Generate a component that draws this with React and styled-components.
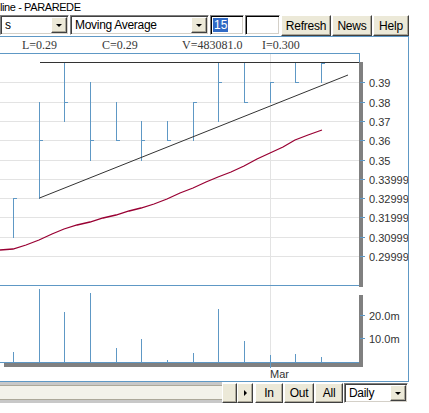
import React from 'react'
import styled, { createGlobalStyle } from 'styled-components'

const GlobalStyle = createGlobalStyle`
    html, body {
        margin: 0;
        padding: 0;
        background: #fff;
    }
    body {
        font-family: "Liberation Sans", Arial, sans-serif;
        font-size: 11px;
        color: #000;
        overflow: hidden;
    }
`

const BLUE = '#5e98c5'
const GRID = '#e3e3e3'
const LABEL = '#333'

// y of price level k (k=0 is 0.40)
const lv = k => 63 + k * 19.3

// x, high level, low level, close level
const bars = [
    [13, 7, 9, 7], [39, 2, 7, 4], [64, 0, 3, 2], [90, 1, 5, 4],
    [116, 2, 4, 4], [141, 3, 5, 4], [167, 3, 4, 4], [193, 2, 4, 2],
    [218, 0, 3, 1], [244, 0, 2, 2], [270, 1, 2, 1], [295, 0, 1, 1],
    [321, 0, 1, 0],
]

const volumes = [
    [13, 352], [39, 289], [64, 312], [90, 293], [116, 348], [141, 339], [167, 360],
    [193, 353], [218, 309], [244, 341], [270, 355], [295, 354], [321, 357],
]

const priceLabels = ['0.39', '0.38', '0.37', '0.36', '0.35', '0.33999', '0.32999', '0.31999', '0.30999', '0.29999']

const maPoints = [
    [0, 250], [13, 249], [26, 245], [39, 240], [52, 234], [64, 229], [77, 225], [90, 222],
    [103, 218], [116, 215], [129, 211], [141, 208], [154, 204], [167, 199], [180, 193],
    [193, 188], [206, 182], [218, 177], [231, 172], [244, 166], [257, 159], [270, 153],
    [283, 147], [295, 140], [308, 135], [322, 130],
].map(p => p.join(',')).join(' ')

function Chart() {
    return (
        <ChartSvg width="408" height="328" viewBox="0 53 408 328">
            <g shapeRendering="crispEdges">
                {priceLabels.map((l, i) => (
                    <line key={l} x1="0" x2="359" y1={Math.round(lv(i + 1)) + 0.5} y2={Math.round(lv(i + 1)) + 0.5} stroke={GRID} />
                ))}
                <line x1="270.5" x2="270.5" y1="54" y2="362" stroke={GRID} />

                <line x1="0" x2="360" y1="53.5" y2="53.5" stroke={BLUE} />
                <line x1="359.5" x2="359.5" y1="53" y2="62" stroke={BLUE} />
                <line x1="0" x2="360" y1="285.5" y2="285.5" stroke={BLUE} />
                <line x1="0" x2="360" y1="362.5" y2="362.5" stroke={BLUE} />
                <rect x="359" y="62" width="4" height="225" fill="#808080" />
                <rect x="359" y="295" width="4" height="72" fill="#808080" />
                <rect x="4" y="363" width="359" height="4" fill="#808080" />

                {bars.map(([x, h, l, c]) => (
                    <g key={x} stroke={BLUE}>
                        <line x1={x + 0.5} x2={x + 0.5} y1={Math.round(lv(h))} y2={Math.round(lv(l)) + 1} />
                        <line x1={x + 1} x2={x + 4} y1={Math.round(lv(c)) + 0.5} y2={Math.round(lv(c)) + 0.5} />
                    </g>
                ))}

                {volumes.map(([x, top]) => (
                    <line key={x} x1={x + 0.5} x2={x + 0.5} y1={top} y2="362" stroke={BLUE} />
                ))}
                <line x1="270.5" x2="270.5" y1="362" y2="368" stroke={BLUE} />

                {priceLabels.map((l, i) => (
                    <line key={l} x1="360" x2="365" y1={Math.round(lv(i + 1)) + 0.5} y2={Math.round(lv(i + 1)) + 0.5} stroke={BLUE} />
                ))}
                <line x1="360" x2="365" y1="315.5" y2="315.5" stroke={BLUE} />
                <line x1="360" x2="365" y1="338.5" y2="338.5" stroke={BLUE} />

                <line x1="40" x2="359" y1="62.5" y2="62.5" stroke="#333" />
            </g>

            <line x1="39.5" y1="198" x2="348" y2="75" stroke="#333" strokeWidth="1" />
            <polyline points={maPoints} fill="none" stroke="#990033" strokeWidth="1.3" />

            <g fill={LABEL} fontSize="11" fontFamily='"Liberation Sans", Arial, sans-serif'>
                {priceLabels.map((l, i) => (
                    <text key={l} x="369" y={Math.round(lv(i + 1)) + 4.5}>{l}</text>
                ))}
                <text x="369" y="320">20.0m</text>
                <text x="369" y="343">10.0m</text>
                <text x="270" y="378">Mar</text>
            </g>
        </ChartSvg>
    )
}

function DropDown({ width, text }) {
    return (
        <Combo $w={width}>
            <ComboText>{text}</ComboText>
            <DropButton><DownArrow /></DropButton>
        </Combo>
    )
}

function App() {
    return (
        <Page>
            <GlobalStyle />
            <TitleText>line - PARAREDE</TitleText>
            <Toolbar>
                <DropDown width={69} text="s" />
                <DropDown width={139} text="Moving Average" />
                <TextInput $w={34}><Selected>15</Selected></TextInput>
                <TextInput $w={35} />
                <Button $w={50}>Refresh</Button>
                <Button $w={40}>News</Button>
                <Button $w={36}>Help</Button>
            </Toolbar>
            <ChartPanel>
                <InfoRow>
                    <InfoItem>L=0.29</InfoItem>
                    <InfoItem>C=0.29</InfoItem>
                    <InfoItem>V=483081.0</InfoItem>
                    <InfoItem>I=0.300</InfoItem>
                </InfoRow>
                <Chart />
            </ChartPanel>
            <BottomBar>
                <ScrollTrack>
                    <ScrollThumb />
                </ScrollTrack>
                <ScrollButton $w={15} />
                <ScrollButton $w={16}><RightArrow /></ScrollButton>
                <BottomButtons>
                    <Button $w={28} $h={20}>In</Button>
                    <Button $w={30} $h={20}>Out</Button>
                    <Button $w={28} $h={20}>All</Button>
                    <DropDown width={64} text="Daily" />
                </BottomButtons>
            </BottomBar>
        </Page>
    )
}

export default App

const Page = styled.div`
    width: 429px;
    height: 413px;
    display: flex;
    flex-direction: column;
`

const TitleText = styled.div`
    height: 15px;
    line-height: 15px;
    font-size: 11px;
    letter-spacing: -0.4px;
    white-space: nowrap;
`

const Toolbar = styled.div`
    display: flex;
    gap: 1px;
    height: 21px;
`

const Combo = styled.div`
    box-sizing: border-box;
    width: ${props => props.$w}px;
    height: 20px;
    background: #fff;
    border: 1px solid;
    border-color: #808080 #fff #fff #808080;
    box-shadow: inset 1px 1px #404040, inset -1px -1px #d4d0c8;
    display: flex;
    align-items: center;
    padding: 1px;
`

const ComboText = styled.div`
    flex: 1;
    padding-left: 3px;
    font-size: 12px;
    letter-spacing: -0.3px;
    white-space: nowrap;
    overflow: hidden;
`

const DropButton = styled.div`
    box-sizing: border-box;
    width: 16px;
    height: 16px;
    background: #ece9d8;
    border: 1px solid;
    border-color: #fff #404040 #404040 #fff;
    box-shadow: inset -1px -1px #aca899;
    display: flex;
    align-items: center;
    justify-content: center;
`

const DownArrow = styled.div`
    width: 0;
    height: 0;
    border-left: 3px solid transparent;
    border-right: 3px solid transparent;
    border-top: 3px solid #000;
    margin-top: 1px;
`

const RightArrow = styled.div`
    width: 0;
    height: 0;
    border-top: 3px solid transparent;
    border-bottom: 3px solid transparent;
    border-left: 3px solid #000;
`

const TextInput = styled.div`
    box-sizing: border-box;
    width: ${props => props.$w}px;
    height: 20px;
    background: #fff;
    border: 1px solid;
    border-color: #808080 #fff #fff #808080;
    box-shadow: inset 1px 1px #000, inset -1px -1px #d4d0c8;
    padding: 2px 0 0 2px;
    font-size: 12px;
`

const Selected = styled.span`
    display: inline-block;
    background: #316ac5;
    color: #fff;
    line-height: 14px;
    padding: 0 1px;
`

const Button = styled.div`
    box-sizing: border-box;
    width: ${props => props.$w}px;
    height: ${props => props.$h || 21}px;
    background: #ece9d8;
    border: 1px solid;
    border-color: #fff #404040 #404040 #fff;
    box-shadow: inset -1px -1px #aca899;
    display: flex;
    align-items: center;
    justify-content: center;
    font-size: 12px;
    letter-spacing: -0.2px;
`

const ChartPanel = styled.div`
    width: 408px;
    border-top: 1px solid ${BLUE};
    border-right: 1px solid ${BLUE};
    border-bottom: 1px solid ${BLUE};
    display: flex;
    flex-direction: column;
    background: #fff;
`

const InfoRow = styled.div`
    height: 16px;
    display: flex;
    padding-left: 22px;
    font-family: "Liberation Serif", "Times New Roman", serif;
    font-size: 12px;
    line-height: 16px;
    color: #383838;
`

const InfoItem = styled.div`
    width: 80px;
    white-space: nowrap;
`

const ChartSvg = styled.svg`
    display: block;
    overflow: hidden;
`

const BottomBar = styled.div`
    display: flex;
    align-items: flex-start;
    height: 21px;
`

const ScrollTrack = styled.div`
    box-sizing: border-box;
    width: 222px;
    height: 21px;
    background: #c8c8c8;
    padding: 3px 0;
`

const ScrollThumb = styled.div`
    box-sizing: border-box;
    height: 15px;
    background: #f3f2ea;
    border-top: 1px solid #aca899;
    border-bottom: 1px solid #aca899;
`

const ScrollButton = styled.div`
    box-sizing: border-box;
    width: ${props => props.$w}px;
    height: 20px;
    margin-top: 1px;
    background: #ece9d8;
    border: 1px solid;
    border-color: #fff #404040 #404040 #fff;
    box-shadow: inset -1px -1px #aca899;
    display: flex;
    align-items: center;
    justify-content: center;
`

const BottomButtons = styled.div`
    display: flex;
    gap: 1px;
    margin-left: 2px;
    margin-top: 1px;
`
